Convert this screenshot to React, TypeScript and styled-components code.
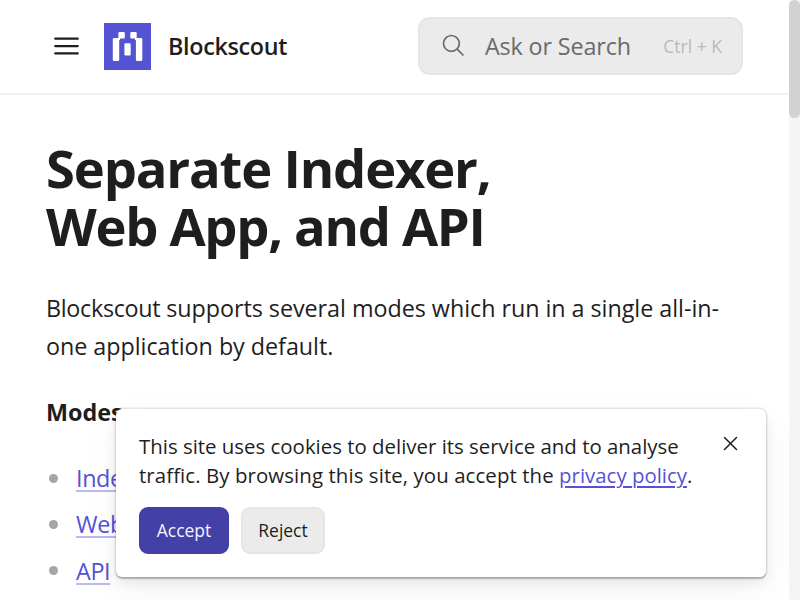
import React from "react";
import styled, { createGlobalStyle } from "styled-components";

const Global = createGlobalStyle`
  * { box-sizing: border-box; }
  html, body { margin: 0; background: #fff; overflow: hidden; }
  body { font-family: "Open Sans", "Noto Sans", sans-serif; color: #1e1e1e; }
  button { font: inherit; }
`;
const Viewport = styled.div`
  position: relative;
  display: flex;
  width: 800px;
  height: 600px;
  overflow: hidden;
`;
const Page = styled.div`
  flex: 1;
  min-width: 0;
`;
const ScrollTrack = styled.div`
  width: 11px;
  height: 600px;
  background: #f5f5f5;
`;
const ScrollThumb = styled.div`
  height: 118px;
  border-radius: 5.5px;
  background: #d2d2d2;
`;
const Header = styled.header`
  display: flex;
  align-items: center;
  height: 95px;
  padding: 0 46px 1px 54px;
  border-bottom: 2px solid #f2f2f2;
`;
const Brand = styled.div`
  display: flex;
  align-items: center;
  flex: 1;
`;
const MenuIcon = styled.svg`
  width: 25px;
  height: 20px;
  margin-right: 25px;
`;
const Logo = styled.svg`
  width: 47px;
  height: 47px;
  margin-right: 17px;
`;
const BrandName = styled.span`
  font-size: 23.33px;
  font-weight: 600;
  line-height: 30px;
  letter-spacing: -0.32px;
  white-space: nowrap;
`;
const Search = styled.div`
  display: flex;
  align-items: center;
  width: 325px;
  height: 58px;
  border: 2px solid #e5e5e5;
  border-radius: 12px;
  background: #ebebeb;
  padding: 0 19px 0 22px;
`;
const SearchIcon = styled.svg`
  width: 24px;
  height: 24px;
  margin-right: 19px;
`;
const Placeholder = styled.span`
  flex: 1;
  font-size: 23.33px;
  letter-spacing: -0.14px;
  color: #6a6a6a;
  white-space: nowrap;
`;
const Shortcut = styled.span`
  font-size: 17.5px;
  color: #b9b9b9;
  white-space: nowrap;
`;
const Main = styled.main`
  padding: 44px 46px 0;
`;
const Tracked = styled.span<{ $spacing: number }>`
  letter-spacing: ${(p) => p.$spacing}px;
`;
const Title = styled.h1`
  margin: 0;
  font-size: 52.5px;
  line-height: 58.3px;
  font-weight: 700;
  letter-spacing: -1.31px;
`;
const Paragraph = styled.p`
  margin: 34px 0 0;
  font-size: 23.33px;
  line-height: 37.9px;
  white-space: nowrap;
`;
const Subhead = styled.p`
  margin: 28px 0 0;
  font-size: 23.33px;
  line-height: 38px;
  font-weight: 700;
`;
const ModeList = styled.ul`
  display: grid;
  gap: 8.4px;
  margin: 27.6px 0 0;
  padding: 0;
  list-style: none;
`;
const Mode = styled.li`
  display: flex;
  align-items: center;
  font-size: 23.33px;
  line-height: 38px;
`;
const Bullet = styled.span`
  width: 9px;
  height: 9px;
  margin: 0 18px 0 3px;
  border-radius: 50%;
  background: #a5a5a5;
`;
const ModeLink = styled.a`
  color: #5552d4;
  letter-spacing: -0.35px;
  text-decoration: underline;
  text-decoration-color: #bbbaee;
  text-decoration-thickness: 2px;
  text-underline-offset: 3px;
  text-decoration-skip-ink: none;
  white-space: nowrap;
`;
const CookieCard = styled.aside`
  position: absolute;
  left: 116px;
  top: 409px;
  width: 650px;
  height: 168px;
  padding: 23px;
  border-radius: 6px;
  background: #fff;
  box-shadow: 0 0 0 1.4px rgba(30, 30, 30, 0.09), 0 1.5px 1.5px rgba(0, 0, 0, 0.22), 0 6px 12px rgba(0, 0, 0, 0.07), 0 12px 36px rgba(0, 0, 0, 0.05);
`;
const CookieText = styled.p`
  margin: 0;
  font-size: 20.42px;
  line-height: 29.2px;
  white-space: nowrap;
`;
const PolicyLink = styled.a`
  color: #5552d4;
  text-decoration: underline;
  text-decoration-thickness: 2px;
  text-underline-offset: 3px;
`;
const CloseButton = styled.button`
  position: absolute;
  top: 27px;
  right: 28px;
  width: 15px;
  height: 15px;
  padding: 0;
  border: 0;
  background: none;
  svg { display: block; }
`;
const Actions = styled.div`
  display: flex;
  gap: 12px;
  margin-top: 16.6px;
`;
const ActionButton = styled.button<{ $primary?: boolean; $width: number }>`
  width: ${(p) => p.$width}px;
  height: 47px;
  padding: 0 0 1px;
  border: 2px solid ${(p) => (p.$primary ? "#413ea5" : "#e5e5e5")};
  border-radius: 9px;
  background: ${(p) => (p.$primary ? "#4340a7" : "#ebebeb")};
  color: ${(p) => (p.$primary ? "#f4f4ff" : "#1e1e1e")};
  font-size: 17.5px;
`;

const modes = ["Indexer", "Web App", "API"];

export default function App() {
  return (
    <>
      <Global />
      <Viewport>
        <Page>
          <Header>
            <Brand>
              <MenuIcon viewBox="0 0 25 20" fill="none" stroke="#1e1e1e" strokeWidth="2.3" strokeLinecap="round">
                <path d="M1.3 2.7h22.4M1.3 10.1h22.4M1.3 17.4h22.4" />
              </MenuIcon>
              <Logo viewBox="0 0 47 47">
                <path fill="#5353d3" d="M0 0h47v47H0z" />
                <g fill="#fff">
                  <rect x="8.8" y="15.1" width="6.4" height="22.9" rx="1.3" />
                  <rect x="14.4" y="9" width="6.4" height="6.6" rx="1.3" />
                  <rect x="20.4" y="20.3" width="6.3" height="12.2" rx="1.3" />
                  <rect x="26.3" y="9" width="6.4" height="6.6" rx="1.3" />
                  <rect x="31.9" y="15.1" width="6.4" height="22.9" rx="1.3" />
                  <path d="M13 15h3v2h-3zM31 15h3v2h-3z" />
                </g>
              </Logo>
              <BrandName>Blockscout</BrandName>
            </Brand>
            <Search>
              <SearchIcon viewBox="0 0 24 24" fill="none" stroke="#6a6a6a" strokeWidth="1.7" strokeLinecap="round">
                <circle cx="9.4" cy="9.4" r="7.9" />
                <path d="M15.2 15.2l5.8 5.8" />
              </SearchIcon>
              <Placeholder>Ask or Search</Placeholder>
              <Shortcut>Ctrl + K</Shortcut>
            </Search>
          </Header>
          <Main>
            <Title><Tracked $spacing={-1.15}>Separate Indexer,</Tracked><br />Web App, and API</Title>
            <Paragraph>
              <Tracked $spacing={-0.3}>Blockscout </Tracked>
              <Tracked $spacing={-0.04}>supports several modes which run in a single all-in-</Tracked><br />
              <Tracked $spacing={-0.04}>one application by default.</Tracked>
            </Paragraph>
            <Subhead>Modes</Subhead>
            <ModeList>
              {modes.map((m) => (
                <Mode key={m}><Bullet /><ModeLink>{m}</ModeLink></Mode>
              ))}
            </ModeList>
          </Main>
        </Page>
        <CookieCard>
          <CookieText>
            This site uses cookies to deliver its service and to analyse<br />
            <Tracked $spacing={0.085}>traffic. By browsing this site, you accept the </Tracked><PolicyLink>privacy policy</PolicyLink>.
          </CookieText>
          <Actions>
            <ActionButton $primary $width={90}>Accept</ActionButton>
            <ActionButton $width={84}>Reject</ActionButton>
          </Actions>
          <CloseButton aria-label="Close">
            <svg width="15" height="15" viewBox="0 0 15 15" fill="none" stroke="#1e1e1e" strokeWidth="1.5" strokeLinecap="round">
              <path d="M1.5 1.5l12 12M13.5 1.5l-12 12" />
            </svg>
          </CloseButton>
        </CookieCard>
        <ScrollTrack><ScrollThumb /></ScrollTrack>
      </Viewport>
    </>
  );
}
